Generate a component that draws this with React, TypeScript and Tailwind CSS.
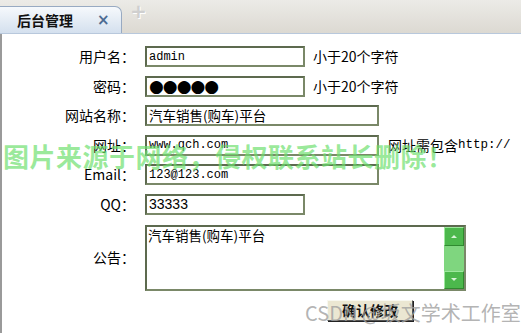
import React from "react"

const cjk = "font-['Noto_Sans_CJK_SC',sans-serif]"
const mono = "font-['Liberation_Mono','Noto_Sans_CJK_SC',monospace]"

function Field({ label, children, hint }: { label: string; children: React.ReactNode; hint?: string }) {
  return (
    <div className="flex items-center h-[21px]">
      <div className={`w-[133px] text-right text-[14px] text-black ${cjk}`}>{label}：</div>
      <div className="ml-[10px] flex items-center">
        {children}
        {hint && <span className={`ml-[8px] text-[14px] text-black ${cjk}`}>{hint}</span>}
      </div>
    </div>
  )
}

function Box({ w, value, className = "" }: { w: string; value: string; className?: string }) {
  return (
    <div className={`${w} h-[21px] border-2 border-[#7a8868] border-t-[#5d6a4f] border-l-[#5d6a4f] bg-white flex items-center pl-[2px] text-[12px] text-black leading-none ${className}`}>
      {value}
    </div>
  )
}

export default function App() {
  return (
    <div className="relative w-[521px] h-[333px] bg-white overflow-hidden">
      {/* tab bar */}
      <div className="h-[34px] bg-gradient-to-b from-[#ecebe7] to-[#dcd9d2] flex items-end border-b border-[#b8c8dc]">
        <div className="w-[122px] h-[27px] rounded-tr-[7px] border border-l-0 border-b-0 border-[#98aac2] bg-gradient-to-b from-[#f6f9fc] to-[#d4e0ee] flex items-center">
          <span className={`ml-[17px] text-[14px] font-bold text-[#111] ${cjk}`}>后台管理</span>
          <span className="ml-[24px] text-[15px] font-bold text-[#4d6b92] font-['DejaVu_Sans',sans-serif]">×</span>
        </div>
        <span className="ml-[8px] mb-[7px] text-[20px] font-bold text-[#cfcfcf] font-['DejaVu_Sans',sans-serif] [text-shadow:1px_1px_0_#fff]">+</span>
      </div>

      {/* form */}
      <div className="h-[299px] border-l-2 border-[#9a9a9a] pt-[12px] flex flex-col gap-[8.6px]">
        <Field label="用户名" hint="小于20个字符">
          <Box w="w-[160px]" value="admin" className={mono} />
        </Field>
        <Field label="密码" hint="小于20个字符">
          <Box w="w-[160px]" value="●●●●●" className="text-[17px] tracking-[-1px] font-['DejaVu_Sans',sans-serif]" />
        </Field>
        <Field label="网站名称">
          <Box w="w-[234px]" value="汽车销售(购车)平台" className={`${cjk} text-[13.5px]`} />
        </Field>
        <Field label="网址">
          <Box w="w-[234px]" value="www.qch.com" className={mono} />
          <span className={`ml-[9px] text-[14px] text-black ${cjk}`}>网址需包含</span>
          <span className={`text-[12.5px] text-black ${mono}`}>http://</span>
        </Field>
        <Field label="Email">
          <Box w="w-[234px]" value="123@123.com" className={mono} />
        </Field>
        <Field label="QQ">
          <Box w="w-[160px]" value="33333" className="font-['Liberation_Sans',sans-serif] text-[14px]" />
        </Field>
        <div className="flex items-center mt-[1px]">
          <div className={`w-[133px] text-right text-[14px] text-black ${cjk}`}>公告：</div>
          <div className="ml-[10px] w-[321px] h-[66px] border-2 border-[#7a8868] border-t-[#5d6a4f] border-l-[#5d6a4f] bg-white flex">
            <div className={`flex-1 pl-[1px] text-[13.5px] leading-[16px] text-black ${cjk}`}>汽车销售(购车)平台</div>
            <div className="w-[20px] flex flex-col bg-[#7fd67f]">
              <div className="h-[19px] bg-[#4cb84c] border border-[#2f8a2f] border-t-[#9ee89e] border-l-[#9ee89e] flex items-center justify-center">
                <div className="w-0 h-0 border-x-[3px] border-x-transparent border-b-[3px] border-b-[#d8f4d8]" />
              </div>
              <div className="flex-1" />
              <div className="h-[18px] bg-[#4cb84c] border border-[#2f8a2f] border-t-[#9ee89e] border-l-[#9ee89e] flex items-center justify-center">
                <div className="w-0 h-0 border-x-[3px] border-x-transparent border-t-[3px] border-t-[#d8f4d8]" />
              </div>
            </div>
          </div>
        </div>
        <div className="ml-[325px] mt-[-1px]">
          <button className={`w-[86px] h-[21px] bg-[#ebe7d2] border border-[#555] border-t-[#f8f8f0] border-l-[#f8f8f0] shadow-[1px_1px_0_#222] text-[14px] font-bold text-[#111] leading-none ${cjk}`}>
            确认修改
          </button>
        </div>
      </div>

      {/* watermarks */}
      <div className={`absolute left-[3px] top-[136px] text-[26px] font-bold text-[#6ee06e]/70 tracking-[0.5px] whitespace-nowrap pointer-events-none ${cjk}`}>
        图片来源于网络，侵权联系站长删除！
      </div>
      <div className={`absolute left-[305px] top-[298px] text-[20px] text-[#a0a0a0]/80 whitespace-nowrap pointer-events-none ${cjk}`}>
        CSDN @坂文学术工作室
      </div>
    </div>
  )
}
